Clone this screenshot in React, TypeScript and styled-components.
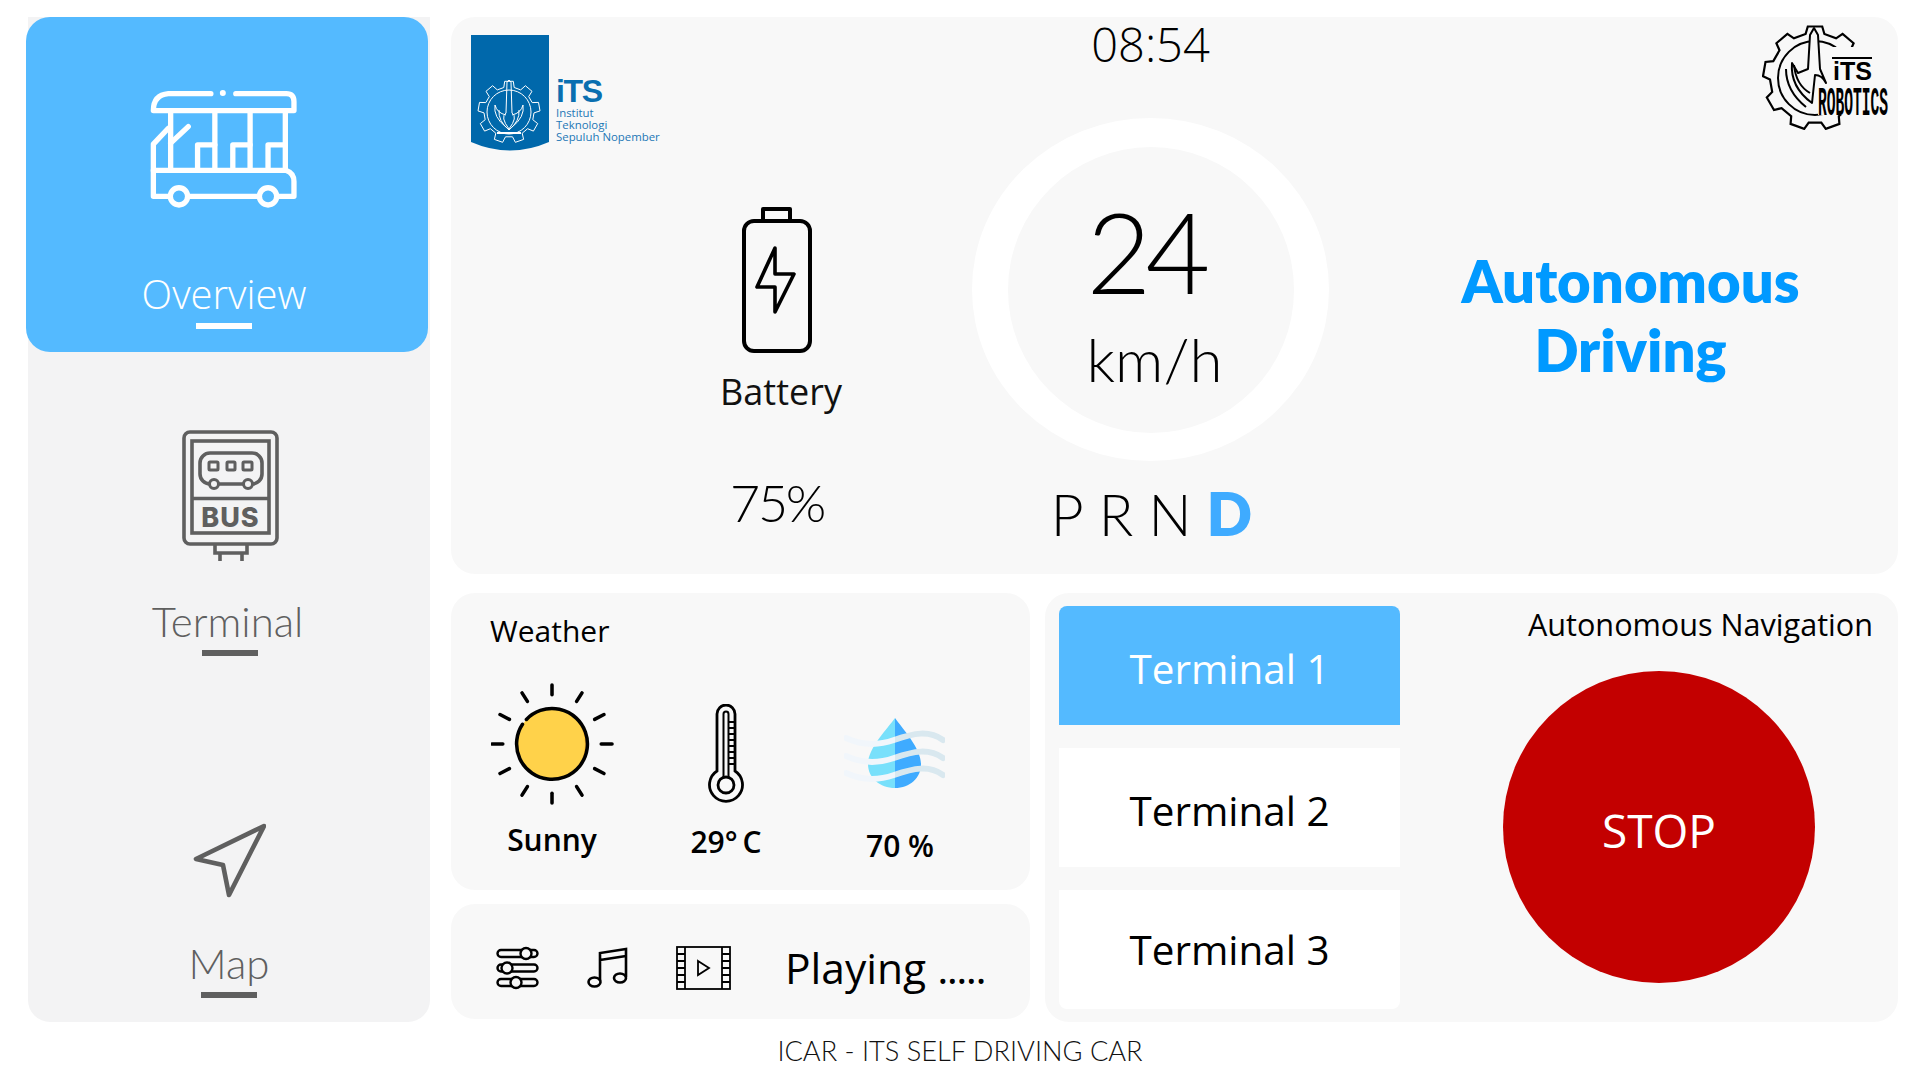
import React from "react";
import styled, { createGlobalStyle } from "styled-components";

const Global = createGlobalStyle`
  html, body { margin: 0; padding: 0; background: #fff; }
  body { font-family: "Open Sans", "Noto Sans", sans-serif; color: #000; }
  * { box-sizing: border-box; }
`;

const GEO = `"Lato", "Inter", sans-serif`;

const Page = styled.div`
  width: 1920px; height: 1080px; overflow: hidden; position: relative;
  display: grid; grid-template-columns: 402px 1447px; column-gap: 21px;
  grid-template-rows: 1005px auto; padding: 17px 0 0 28px; background: #fff;
`;
const Sidebar = styled.nav`
  background: #f3f3f4; border-radius: 0 0 22px 22px; display: flex; flex-direction: column;
`;
const NavItem = styled.div<{ $active?: boolean; $h: number; $pad: number; $pl?: number }>`
  height: ${p => p.$h}px; padding-top: ${p => p.$pad}px; padding-left: ${p => p.$pl ?? 0}px;
  display: flex; flex-direction: column; align-items: center;
  color: ${p => (p.$active ? "#fff" : "#5f5f5f")};
  ${p => p.$active ? `background:#54baff;border-radius:24px;margin:0 2px 0 -2px;padding-right:6px;` : ""}
`;
const NavLabel = styled.div<{ $active?: boolean; $mt: number; $mr?: number }>`
  font-family: ${p => (p.$active ? `"Open Sans", sans-serif` : GEO)};
  font-weight: 300; font-size: ${p => (p.$active ? 40 : 42)}px; line-height: 46px;
  margin-top: ${p => p.$mt}px; margin-right: ${p => p.$mr ?? 0}px;
`;
const NavBar = styled.div`
  width: 56px; height: 6px; background: currentColor; margin-top: 6px;
`;

const Main = styled.main`
  display: flex; flex-direction: column; gap: 19px; height: 1005px;
`;
const TopPanel = styled.section`
  height: 557px; background: #f8f8f8; border-radius: 24px;
  display: grid; grid-template-columns: 521px 357px 569px;
`;
const LeftCol = styled.div`
  display: flex; flex-direction: column; padding: 18px 0 0 20px;
`;
const LogoRow = styled.div`
  display: flex; align-items: flex-start; height: 117px; gap: 7px;
`;
const LogoText = styled.div`
  display: flex; flex-direction: column; padding-top: 43px; color: #1c77b6;
  font-size: 11.4px; line-height: 12px;
`;
const LogoMark = styled.span`
  font-family: "Liberation Sans", sans-serif; font-weight: 700; font-size: 32px; line-height: 26px;
  color: #0a6fb0; letter-spacing: -1.4px; margin-bottom: 3px;
`;
const BatteryBlock = styled.div`
  display: flex; flex-direction: column; align-items: center; width: 240px; margin: 54px 0 0 186px;
  align-self: flex-start;
`;
const BatteryLabel = styled.div`
  font-size: 36px; line-height: 48px; margin: 15px 0 0 8px; color: #111; font-weight: 400;
`;
const BatteryValue = styled.div`
  font-family: ${GEO}; font-weight: 300; font-size: 52px; line-height: 60px; margin-top: 56px; color: #000;
  letter-spacing: -2.3px;
`;
const CenterCol = styled.div`
  display: flex; flex-direction: column; align-items: center;
`;
const Clock = styled.div`
  height: 101px; font-weight: 300; font-size: 47px; line-height: 54px; color: #000;
`;
const Gauge = styled.div`
  width: 357px; height: 343px; border-radius: 50%; background: #fff;
  display: flex; align-items: center; justify-content: center;
`;
const GaugeInner = styled.div`
  width: 286px; height: 286px; border-radius: 50%; background: #f8f8f8;
  display: flex; flex-direction: column; align-items: center;
`;
const Speed = styled.div`
  font-family: ${GEO}; font-weight: 300; font-size: 112px; line-height: 112px; margin-top: 48px;
  letter-spacing: -6px; padding-right: 10px;
`;
const Unit = styled.div`
  font-family: ${GEO}; font-weight: 300; font-size: 60px; line-height: 66px; margin: 19px 0 0 8px;
`;
const Gears = styled.div`
  display: flex; align-items: baseline; margin-top: 14px; padding-left: 2px;
`;
const GearLetter = styled.span<{ $on?: boolean }>`
  font-family: ${GEO}; font-weight: ${p => (p.$on ? 800 : 300)};
  font-size: ${p => (p.$on ? 60 : 57)}px; line-height: 76px;
  color: ${p => (p.$on ? "#3fabff" : "#000")}; margin-right: ${p => (p.$on ? 0 : 15)}px;
`;
const RightCol = styled.div`
  display: flex; flex-direction: column;
`;
const RoboticsWrap = styled.div`
  display: flex; justify-content: flex-end; padding: 8px 8px 0 0; height: 113px;
`;
const Mode = styled.div`
  font-family: ${GEO}; font-weight: 800; font-size: 58px; line-height: 69px; color: #0099ff;
  text-align: center; margin: 116px 0 0 34px;
`;

const LowerRow = styled.div`
  display: grid; grid-template-columns: 579px 853px; column-gap: 15px; height: 429px;
`;
const LowerLeft = styled.div`
  display: flex; flex-direction: column; gap: 14px;
`;
const WeatherCard = styled.section`
  height: 297px; background: #f8f8f8; border-radius: 24px; padding: 16px 0 0 14px;
`;
const WeatherTitle = styled.div`
  font-size: 30px; line-height: 44px; padding-left: 25px; color: #000;
`;
const WeatherGrid = styled.div`
  display: grid; grid-template-columns: repeat(3, 174px); margin-top: 27px;
`;
const WeatherCol = styled.div`
  display: flex; flex-direction: column; align-items: center;
`;
const IconBox = styled.div<{ $pt?: number; $pr?: number }>`
  height: 128px; display: flex; align-items: center; justify-content: center;
  padding-top: ${p => p.$pt ?? 0}px; padding-right: ${p => p.$pr ?? 0}px;
`;
const WeatherValue = styled.div<{ $mt: number }>`
  font-weight: 600; font-size: 30px; line-height: 42px; color: #000; margin-top: ${p => p.$mt}px;
`;
const MediaCard = styled.section`
  height: 115px; background: #f8f8f8; border-radius: 24px;
  display: flex; align-items: center; padding: 12px 0 0 45px;
`;
const MediaIcon = styled.svg<{ $ml: number }>`
  margin-left: ${p => p.$ml}px; flex: none;
`;
const Playing = styled.div`
  font-size: 42.5px; line-height: 60px; margin-left: 54px; color: #000; font-weight: 400;
`;
const Dots = styled.span`
  letter-spacing: -1.6px;
`;
const NavPanel = styled.section`
  background: #f8f8f8; border-radius: 24px; display: grid; grid-template-columns: 355px 498px;
  padding: 0;
`;
const TerminalList = styled.div`
  display: flex; flex-direction: column; padding: 13px 0 0 14px;
`;
const TerminalBtn = styled.button<{ $on?: boolean; $r: string; $mb: number; $pt: number }>`
  appearance: none; border: 0; width: 341px; height: 119px; border-radius: ${p => p.$r};
  background: ${p => (p.$on ? "#54baff" : "#fff")}; color: ${p => (p.$on ? "#fff" : "#000")};
  font-family: inherit; font-size: 40.4px; margin-bottom: ${p => p.$mb}px; padding: ${p => p.$pt}px 0 0;
`;
const StopCol = styled.div`
  display: flex; flex-direction: column; align-items: flex-end; padding: 10px 25px 0 0;
`;
const StopTitle = styled.div`
  font-size: 30.6px; line-height: 42px; color: #000;
`;
const StopBtn = styled.button`
  appearance: none; border: 0; width: 312px; height: 312px; border-radius: 50%; background: #c30000;
  color: #fff; font-family: inherit; font-size: 46px; margin: 26px 58px 0 0; padding: 5px 0 0;
`;
const Footer = styled.footer`
  grid-column: 1 / 3; margin: 12px -22px 0 -28px; text-align: center; font-family: ${GEO}; font-weight: 300;
  font-size: 27.2px; line-height: 34px; color: #111;
`;

function gearPath(cx: number, cy: number, ro: number, ri: number, n: number) {
  const pts: string[] = [];
  for (let i = 0; i < n; i++) {
    const s = (i / n) * Math.PI * 2 - Math.PI / 2;
    const st = (Math.PI * 2) / n;
    const p = [[ri, -0.3], [ro, -0.2], [ro, 0.2], [ri, 0.3]] as const;
    p.forEach(([r, f]) => {
      const a = s + f * st;
      pts.push(`${(cx + r * Math.cos(a)).toFixed(1)} ${(cy + r * Math.sin(a)).toFixed(1)}`);
    });
  }
  return "M" + pts.join(" L") + " Z";
}

const BusIcon = () => (
  <svg width="148" height="118" viewBox="450 270 445 355" fill="none" stroke="#fff" strokeWidth="16" strokeLinecap="round" strokeLinejoin="round">
    <path d="M633 281H505Q460 285 460 332H883V305Q883 281 860 281H708" />
    <circle cx="669" cy="279" r="9" fill="#fff" stroke="none" />
    <path d="M512 332V512M645 332V512M751 332V512M857 332V512" />
    <path d="M593 512V435H645M699 512V435H751M805 512V435H857" />
    <path d="M505 385L460 433V590H510M512 430L565 380" />
    <path d="M460 512H860Q883 520 883 545V590H838M570 590H772" />
    <circle cx="537" cy="590" r="26" />
    <circle cx="805" cy="590" r="26" />
  </svg>
);

const TerminalIcon = () => (
  <svg width="97" height="131" viewBox="0 0 97 131" fill="none" stroke="#5f5f5f" strokeWidth="3.6">
    <rect x="2" y="2" width="93" height="112" rx="6" />
    <rect x="10" y="11" width="77" height="92" />
    <path d="M10 68.5H87" />
    <rect x="18" y="23" width="62" height="31" rx="10" />
    <rect x="27" y="32" width="9" height="8" rx="1" strokeWidth="3" />
    <rect x="45" y="32" width="8" height="8" rx="1" strokeWidth="3" />
    <rect x="61" y="32" width="9" height="8" rx="1" strokeWidth="3" />
    <circle cx="32" cy="54" r="4.5" fill="#f3f3f4" strokeWidth="3" />
    <circle cx="66" cy="54" r="4.5" fill="#f3f3f4" strokeWidth="3" />
    <text x="48.5" y="97" textAnchor="middle" fontFamily="Inter, sans-serif" fontWeight="800" fontSize="27" letterSpacing="1" fill="#5f5f5f" stroke="none">BUS</text>
    <path d="M33 114V123H65V114M38 123V131M60 123V131" />
  </svg>
);

const MapIcon = () => (
  <svg width="73" height="75" viewBox="0 0 73 75" fill="none" stroke="#5f5f5f" strokeWidth="4.6" strokeLinejoin="round">
    <path d="M71 3L3 36L30 42L36 72Z" />
  </svg>
);

const BatteryIcon = () => (
  <svg width="70" height="147" viewBox="0 0 70 147" fill="none" stroke="#000" strokeWidth="4" strokeLinejoin="round">
    <rect x="2" y="15" width="66" height="130" rx="10" />
    <path d="M21 15V3H48V15" />
    <path d="M33 42L15 81H33V106L52 68H33Z" strokeWidth="3.6" />
  </svg>
);

const SunIcon = () => (
  <svg width="123" height="123" viewBox="0 0 125 123" fill="none" stroke="#000" strokeWidth="3.6" strokeLinecap="round">
    {Array.from({ length: 12 }, (_, i) => {
      const a = (i * Math.PI) / 6;
      const c = Math.cos(a), s = Math.sin(a);
      return <line key={i} x1={62 + 50 * c} y1={61 + 50 * s} x2={62 + 61 * c} y2={61 + 60 * s} />;
    })}
    <circle cx="62" cy="61" r="36" fill="#ffd24a" stroke="none" />
    <path d="M84 33A36 36 0 0 1 84 89A40 40 0 0 0 84 33Z" fill="#fdb92e" stroke="none" />
    <path d="M36 36A36 36 0 1 1 32 41" />
  </svg>
);

const ThermoIcon = () => (
  <svg width="36" height="99" viewBox="0 0 36 99" fill="none" stroke="#000" strokeWidth="2.8" strokeLinecap="round">
    <path d="M9 67V10a9 9 0 0 1 18 0V67a16.5 16.5 0 1 1 -18 0Z" />
    <circle cx="18" cy="81" r="8" />
    <path d="M15.5 73V10a2.5 2.5 0 0 1 5 0V73" strokeWidth="2" />
    <path d="M21 18H26M21 24H26M21 30H26M21 36H26M21 42H26M21 48H26M21 54H26M21 60H26" strokeWidth="2" />
  </svg>
);

const DropIcon = () => (
  <svg width="101" height="70" viewBox="0 0 101 70" fill="none">
    <defs>
      <linearGradient id="wave" gradientUnits="userSpaceOnUse" x1="0" x2="101" y1="0" y2="0">
        <stop offset="0" stopColor="#f1f6fb" />
        <stop offset="0.5" stopColor="#f1f6fb" />
        <stop offset="0.5" stopColor="#d9e8ef" />
        <stop offset="1" stopColor="#d9e8ef" />
      </linearGradient>
    </defs>
    <path d="M51 0C44 10 24 30 24 46C24 60 36 70 51 70Z" fill="#78e0fb" />
    <path d="M51 0C58 10 77 30 77 46C77 60 66 70 51 70Z" fill="#3fabff" />
    {[20, 38, 55].map(y => (
      <path key={y} d={`M2 ${y}C15 ${y + 6} 30 ${y + 9} 50 ${y + 2}S85 ${y - 8} 99 ${y + 2}`} stroke="url(#wave)" strokeWidth="6" strokeLinecap="round" />
    ))}
  </svg>
);

const ItsShield = () => (
  <svg width="78" height="117" viewBox="0 0 78 117">
    <path d="M0 0H78V107Q39 124 0 107Z" fill="#0068ab" />
    <g fill="none" stroke="#fff" strokeWidth="1">
      <path d={gearPath(38, 77, 31, 25, 9)} />
      <circle cx="38" cy="77" r="22" />
      <path d="M36 47L38 45L40 47L41 78Q47 82 38 94Q29 82 35 78Z" />
      <path d="M35 80Q26 78 24 70Q22 82 35 92M41 80Q50 78 52 70Q54 82 41 92" />
      <path d="M28 75Q27 86 38 95Q49 86 48 75" />
      <path d="M26 98H50" strokeWidth="2" />
    </g>
  </svg>
);

const RoboticsLogo = () => (
  <svg width="128" height="105" viewBox="0 0 128 105">
    <g fill="none" stroke="#000">
      <path d={gearPath(53, 53, 52, 45, 9)} strokeWidth="2.2" fill="#f8f8f8" />
      <circle cx="53" cy="53" r="37" strokeWidth="2" />
    </g>
    <rect x="56" y="22" width="72" height="68" fill="#f8f8f8" />
    <path d="M52 3L48 10L46 44L36 48L30 38Q28 62 50 78L53 50Q60 50 64 58L58 44L56 10Z" fill="#f8f8f8" stroke="#000" strokeWidth="2" strokeLinejoin="round" />
    <path d="M24 44Q24 66 44 82M32 40Q34 60 48 68" fill="none" stroke="#000" strokeWidth="2" />
    <path d="M70 33H110" stroke="#000" strokeWidth="2" />
    <text x="71" y="55" fontFamily="Liberation Sans, sans-serif" fontWeight="700" fontSize="25" textLength="39" lengthAdjust="spacingAndGlyphs">iTS</text>
    <text transform="translate(56 90) scale(1 2.8)" fontFamily="Liberation Mono, monospace" fontWeight="700" fontSize="14.5" textLength="70" lengthAdjust="spacingAndGlyphs">ROBOTICS</text>
  </svg>
);

export default function App() {
  return (
    <Page>
      <Global />
      <Sidebar>
        <NavItem $active $h={335} $pad={73}>
          <BusIcon />
          <NavLabel $active $mt={63}>Overview</NavLabel>
          <NavBar />
        </NavItem>
        <NavItem $h={445} $pad={78} $pl={2}>
          <TerminalIcon />
          <NavLabel $mt={37} $mr={5}>Terminal</NavLabel>
          <NavBar />
        </NavItem>
        <NavItem $h={225} $pad={26}>
          <MapIcon />
          <NavLabel $mt={42}>Map</NavLabel>
          <NavBar />
        </NavItem>
      </Sidebar>
      <Main>
        <TopPanel>
          <LeftCol>
            <LogoRow>
              <ItsShield />
              <LogoText>
                <LogoMark>iTS</LogoMark>
                <span>Institut</span>
                <span>Teknologi</span>
                <span>Sepuluh Nopember</span>
              </LogoText>
            </LogoRow>
            <BatteryBlock>
              <BatteryIcon />
              <BatteryLabel>Battery</BatteryLabel>
              <BatteryValue>75%</BatteryValue>
            </BatteryBlock>
          </LeftCol>
          <CenterCol>
            <Clock>08:54</Clock>
            <Gauge>
              <GaugeInner>
                <Speed>24</Speed>
                <Unit>km/h</Unit>
              </GaugeInner>
            </Gauge>
            <Gears>
              <GearLetter>P</GearLetter>
              <GearLetter>R</GearLetter>
              <GearLetter>N</GearLetter>
              <GearLetter $on>D</GearLetter>
            </Gears>
          </CenterCol>
          <RightCol>
            <RoboticsWrap>
              <RoboticsLogo />
            </RoboticsWrap>
            <Mode>Autonomous<br />Driving</Mode>
          </RightCol>
        </TopPanel>
        <LowerRow>
          <LowerLeft>
            <WeatherCard>
              <WeatherTitle>Weather</WeatherTitle>
              <WeatherGrid>
                <WeatherCol>
                  <IconBox><SunIcon /></IconBox>
                  <WeatherValue $mt={11}>Sunny</WeatherValue>
                </WeatherCol>
                <WeatherCol>
                  <IconBox $pt={18}><ThermoIcon /></IconBox>
                  <WeatherValue $mt={13}>29°&#8201;C</WeatherValue>
                </WeatherCol>
                <WeatherCol>
                  <IconBox $pt={18} $pr={12}><DropIcon /></IconBox>
                  <WeatherValue $mt={17}>70 %</WeatherValue>
                </WeatherCol>
              </WeatherGrid>
            </WeatherCard>
            <MediaCard>
              <MediaIcon $ml={0} width="43" height="44" viewBox="0 0 43 44" fill="none" stroke="#000" strokeWidth="2.4">
                <rect x="1.5" y="4" width="40" height="7" rx="3.5" />
                <rect x="1.5" y="18.5" width="40" height="7" rx="3.5" />
                <rect x="1.5" y="33" width="40" height="7" rx="3.5" />
                <circle cx="30" cy="7.5" r="5.5" fill="#f8f8f8" />
                <circle cx="11" cy="22" r="5.5" fill="#f8f8f8" />
                <circle cx="20" cy="36.5" r="5.5" fill="#f8f8f8" />
              </MediaIcon>
              <MediaIcon $ml={48} width="41" height="41" viewBox="0 0 41 41" fill="none" stroke="#000" strokeWidth="2.6">
                <path d="M13 34V6L39 2V30M13 13L39 9" />
                <ellipse cx="7.5" cy="35" rx="6" ry="4.5" />
                <ellipse cx="33" cy="31" rx="6" ry="4.5" />
              </MediaIcon>
              <MediaIcon $ml={48} width="55" height="44" viewBox="0 0 55 44" fill="none" stroke="#000" strokeWidth="1.8">
                <rect x="1" y="1" width="53" height="42" />
                <path d="M9 1V43M46 1V43M1 8H9M1 15H9M1 22H9M1 29H9M1 36H9M46 8H54M46 15H54M46 22H54M46 29H54M46 36H54" />
                <path d="M22 15L33 22L22 29Z" />
              </MediaIcon>
              <Playing>Playing <Dots>.....</Dots></Playing>
            </MediaCard>
          </LowerLeft>
          <NavPanel>
            <TerminalList>
              <TerminalBtn $on $r="8px 8px 0 0" $mb={23} $pt={5}>Terminal 1</TerminalBtn>
              <TerminalBtn $r="0" $mb={23} $pt={5}>Terminal 2</TerminalBtn>
              <TerminalBtn $r="0 0 8px 8px" $mb={0} $pt={0}>Terminal 3</TerminalBtn>
            </TerminalList>
            <StopCol>
              <StopTitle>Autonomous Navigation</StopTitle>
              <StopBtn>STOP</StopBtn>
            </StopCol>
          </NavPanel>
        </LowerRow>
      </Main>
      <Footer>ICAR - ITS SELF DRIVING CAR</Footer>
    </Page>
  );
}
